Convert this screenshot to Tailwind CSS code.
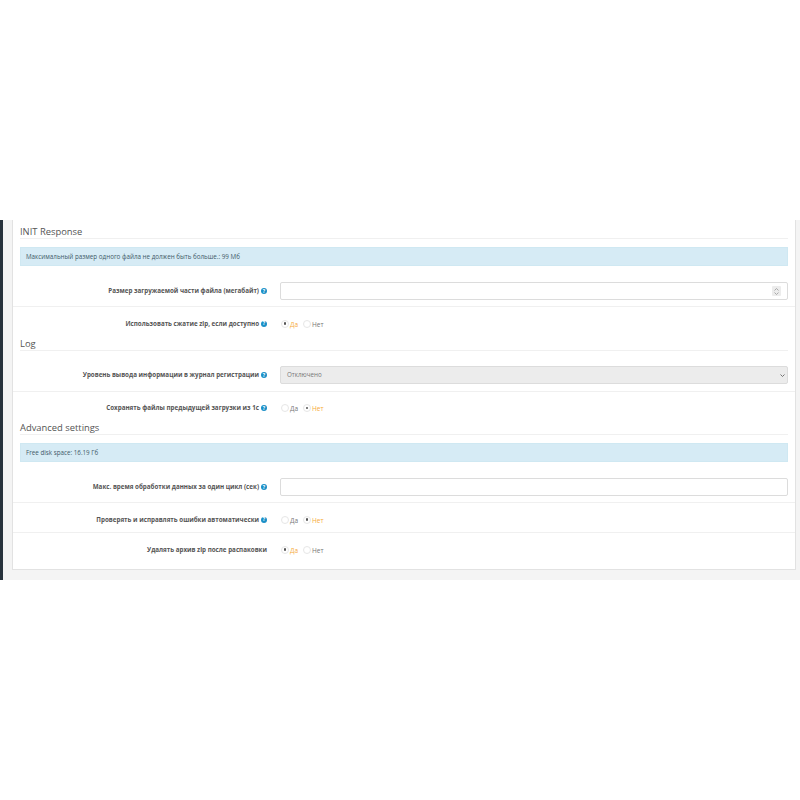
<!DOCTYPE html>
<html>
<head>
<meta charset="utf-8">
<script src="https://cdn.jsdelivr.net/npm/@tailwindcss/browser@4"></script>
</head>
<body class="bg-white font-['Open_Sans',sans-serif] antialiased">
<div class="h-[800px] w-[800px] overflow-hidden bg-white">
  <div class="h-[220px]"></div>
  <div class="flex h-[360px]">
    <div class="w-[3px] bg-[#27323c]"></div>
    <div class="flex-1 bg-[#f4f4f4] pl-[9px] pr-[4px]">
      <div class="h-[350px] border-x border-b border-[#e2e2e2] bg-white">
        <div class="mx-[7px] flex h-[19px] items-end border-b border-[#f0f0f0] text-[9.4px] leading-[12px] text-[#555]">INIT Response</div>
        <div class="mx-[7px] mt-[8px] flex h-[19px] items-center border border-[#cfe8f2] bg-[#d6ebf5] pl-[5px] text-[6.25px] text-[#3f5a68]">Максимальный размер одного файла не должен быть больше.: 99 Мб</div>
        <div class="flex h-[41px] items-center border-b border-[#f0f0f0] pt-[10px]">
          <div class="flex w-[254px] items-center justify-end gap-[2px] text-[6.25px] font-bold text-[#555]">Размер загружаемой части файла (мегабайт)
            <span class="flex h-[6px] w-[6px] items-center justify-center rounded-full bg-[#1b8fc7] text-[5px] font-bold leading-none text-white">?</span></div>
          <div class="relative ml-[13px] h-[18px] w-[508px] rounded-[2px] border border-[#dcdcdc] bg-white">
            <div class="absolute right-[6px] top-[3px] flex h-[10px] w-[9px] flex-col items-center justify-center gap-[1px] rounded-[1px] bg-[#ececec]">
              <svg width="5" height="3" viewBox="0 0 5 3"><path d="M0.5 2.5 L2.5 0.5 L4.5 2.5" fill="none" stroke="#999" stroke-width="0.8"/></svg>
              <svg width="5" height="3" viewBox="0 0 5 3"><path d="M0.5 0.5 L2.5 2.5 L4.5 0.5" fill="none" stroke="#999" stroke-width="0.8"/></svg>
            </div>
          </div>
        </div>
        <div class="flex h-[30px] items-center pt-[3px]">
          <div class="flex w-[254px] items-center justify-end gap-[2px] text-[6.25px] font-bold text-[#555]">Использовать сжатие zip, если доступно
            <span class="flex h-[6px] w-[6px] items-center justify-center rounded-full bg-[#1b8fc7] text-[5px] font-bold leading-none text-white">?</span></div>
          <div class="ml-[14px] flex items-center text-[6.5px]">
            <span class="flex h-[8px] w-[8px] items-center justify-center rounded-full border border-[#e6e6e6] bg-white"><span class="h-[2.5px] w-[2.5px] rounded-full bg-[#555]"></span></span>
            <span class="ml-[1px] mt-[2px] w-[13px] text-[#f6ab3c]">Да</span>
            <span class="h-[8px] w-[8px] rounded-full border border-[#e6e6e6] bg-white"></span>
            <span class="ml-[1px] mt-[2px] text-[#777]">Нет</span>
          </div>
        </div>
        <div class="mx-[7px] -mt-[2px] flex h-[16px] items-end border-b border-[#f0f0f0] text-[9.4px] leading-[12px] text-[#555]">Log</div>
        <div class="flex h-[41px] items-center border-b border-[#f0f0f0] pt-[8px]">
          <div class="flex w-[254px] items-center justify-end gap-[2px] text-[6.25px] font-bold text-[#555]">Уровень вывода информации в журнал регистрации
            <span class="flex h-[6px] w-[6px] items-center justify-center rounded-full bg-[#1b8fc7] text-[5px] font-bold leading-none text-white">?</span></div>
          <div class="ml-[13px] flex h-[18px] w-[508px] items-center justify-between rounded-[2px] border border-[#dcdcdc] bg-[#ececec] pl-[6px] pr-[2px] text-[6.25px] text-[#777]">Отключено
            <svg width="5" height="3" viewBox="0 0 5 3"><path d="M0.5 0.5 L2.5 2.5 L4.5 0.5" fill="none" stroke="#666" stroke-width="0.9"/></svg>
          </div>
        </div>
        <div class="flex h-[29px] items-center pt-[3px]">
          <div class="flex w-[254px] items-center justify-end gap-[2px] text-[6.25px] font-bold text-[#555]">Сохранять файлы предыдущей загрузки из 1с
            <span class="flex h-[6px] w-[6px] items-center justify-center rounded-full bg-[#1b8fc7] text-[5px] font-bold leading-none text-white">?</span></div>
          <div class="ml-[14px] flex items-center text-[6.5px]">
            <span class="h-[8px] w-[8px] rounded-full border border-[#e6e6e6] bg-white"></span>
            <span class="ml-[1px] mt-[2px] w-[13px] text-[#777]">Да</span>
            <span class="flex h-[8px] w-[8px] items-center justify-center rounded-full border border-[#e6e6e6] bg-white"><span class="h-[2.5px] w-[2.5px] rounded-full bg-[#555]"></span></span>
            <span class="ml-[1px] mt-[2px] text-[#f6ab3c]">Нет</span>
          </div>
        </div>
        <div class="mx-[7px] -mt-[2px] flex h-[16px] items-end border-b border-[#f0f0f0] text-[9.4px] leading-[12px] text-[#555]">Advanced settings</div>
        <div class="mx-[7px] mt-[8px] flex h-[19px] items-center border border-[#cfe8f2] bg-[#d6ebf5] pl-[5px] text-[6.25px] text-[#3f5a68]">Free disk space: 16.19 Гб</div>
        <div class="flex h-[41px] items-center border-b border-[#f0f0f0] pt-[10px]">
          <div class="flex w-[254px] items-center justify-end gap-[2px] text-[6.25px] font-bold text-[#555]">Макс. время обработки данных за один цикл (сек)
            <span class="flex h-[6px] w-[6px] items-center justify-center rounded-full bg-[#1b8fc7] text-[5px] font-bold leading-none text-white">?</span></div>
          <div class="ml-[13px] h-[18px] w-[508px] rounded-[2px] border border-[#dcdcdc] bg-white"></div>
        </div>
        <div class="flex h-[30px] items-center border-b border-[#f0f0f0] pt-[4px]">
          <div class="flex w-[254px] items-center justify-end gap-[2px] text-[6.25px] font-bold text-[#555]">Проверять и исправлять ошибки автоматически
            <span class="flex h-[6px] w-[6px] items-center justify-center rounded-full bg-[#1b8fc7] text-[5px] font-bold leading-none text-white">?</span></div>
          <div class="ml-[14px] flex items-center text-[6.5px]">
            <span class="h-[8px] w-[8px] rounded-full border border-[#e6e6e6] bg-white"></span>
            <span class="ml-[1px] mt-[2px] w-[13px] text-[#777]">Да</span>
            <span class="flex h-[8px] w-[8px] items-center justify-center rounded-full border border-[#e6e6e6] bg-white"><span class="h-[2.5px] w-[2.5px] rounded-full bg-[#555]"></span></span>
            <span class="ml-[1px] mt-[2px] text-[#f6ab3c]">Нет</span>
          </div>
        </div>
        <div class="flex h-[30px] items-center pt-[3px]">
          <div class="flex w-[254px] items-center justify-end text-[6.25px] font-bold text-[#555]">Удалять архив zip после распаковки</div>
          <div class="ml-[14px] flex items-center text-[6.5px]">
            <span class="flex h-[8px] w-[8px] items-center justify-center rounded-full border border-[#e6e6e6] bg-white"><span class="h-[2.5px] w-[2.5px] rounded-full bg-[#555]"></span></span>
            <span class="ml-[1px] mt-[2px] w-[13px] text-[#f6ab3c]">Да</span>
            <span class="h-[8px] w-[8px] rounded-full border border-[#e6e6e6] bg-white"></span>
            <span class="ml-[1px] mt-[2px] text-[#777]">Нет</span>
          </div>
        </div>
      </div>
    </div>
  </div>
</div>
</body>
</html>
